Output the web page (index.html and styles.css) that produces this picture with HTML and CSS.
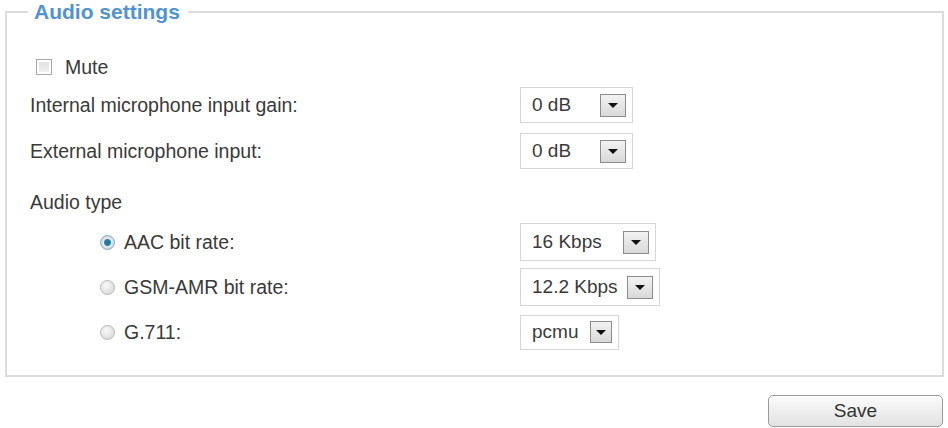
FILE: index.html
```html
<!DOCTYPE html>
<html lang="en">
<head>
    <meta charset="UTF-8">
    <meta name="viewport" content="width=device-width, initial-scale=1.0">
    <title>Audio settings</title>
    <link rel="stylesheet" href="styles.css">
</head>
<body>
    <fieldset class="panel">
        <legend>Audio settings</legend>
        <div class="content">
            <div class="row row-mute">
                <span class="checkbox"></span>
                <span class="check-label">Mute</span>
            </div>

            <div class="row">
                <span class="label">Internal microphone input gain:</span>
                <div class="select w-db"><span>0 dB</span><span class="arrow"></span></div>
            </div>

            <div class="row">
                <span class="label">External microphone input:</span>
                <div class="select w-db"><span>0 dB</span><span class="arrow"></span></div>
            </div>

            <div class="row row-title">
                <span class="label">Audio type</span>
            </div>

            <div class="row row-radio">
                <span class="label label-radio"><span class="radio checked"></span>AAC bit rate:</span>
                <div class="select w-16"><span>16 Kbps</span><span class="arrow"></span></div>
            </div>

            <div class="row row-radio">
                <span class="label label-radio"><span class="radio"></span>GSM-AMR bit rate:</span>
                <div class="select w-12"><span>12.2 Kbps</span><span class="arrow"></span></div>
            </div>

            <div class="row row-radio">
                <span class="label label-radio"><span class="radio"></span>G.711:</span>
                <div class="select w-pcmu"><span>pcmu</span><span class="arrow"></span></div>
            </div>
        </div>
    </fieldset>

    <div class="actions">
        <button class="save">Save</button>
    </div>
</body>
</html>
```

FILE: styles.css
```css
body {
    margin: 0;
    font-family: "Liberation Sans", Arial, sans-serif;
    font-size: 19.5px;
    color: #3a3a3a;
    background-color: #fff;
}
.panel {
    margin: 0 4px 0 5px;
    padding: 0;
    border: 2px solid #dcdcdc;
    min-width: 0;
}
.panel legend {
    margin-left: 21px;
    padding: 0 8px 0 6px;
    font-size: 21px;
    line-height: 24px;
    font-weight: bold;
    color: #4f93cf;
}
.content {
    padding: 23px 0 24px 23px;
}
.row {
    display: flex;
    align-items: center;
    height: 36px;
    margin-bottom: 10px;
}
.row-mute {
    height: 40px;
    margin-bottom: 0;
}
.row-title {
    margin-top: 15px;
    margin-bottom: 3px;
}
.row-radio {
    height: 38px;
    margin-bottom: 7px;
}
.row-radio:last-child {
    margin-bottom: 0;
}
.label {
    width: 490px;
    flex-shrink: 0;
}
.label-radio {
    display: flex;
    align-items: center;
    padding-left: 70px;
    box-sizing: border-box;
}
.checkbox {
    width: 14px;
    height: 14px;
    margin: 0 13px 0 6px;
    border: 1px solid #a8a8a8;
    background: linear-gradient(#dcdcdc, #f4f4f4);
    box-shadow: inset 0 0 0 2px #fff;
}
.radio {
    width: 15px;
    height: 15px;
    margin-right: 9px;
    border-radius: 50%;
    border: 1px solid #b8b8b8;
    background: radial-gradient(circle at 40% 35%, #fafafa, #d2d2d2);
    box-sizing: border-box;
}
.radio.checked {
    border-color: #8fa7b8;
    background: radial-gradient(circle, #1e6f8f 0, #2a85a8 3px, #e4ecf2 4px, #c9d3da 7px);
}
.select {
    display: flex;
    align-items: center;
    justify-content: space-between;
    height: 36px;
    padding: 0 6px 0 11px;
    border: 1px solid #d6d6d6;
    box-sizing: border-box;
    background-color: #fff;
    font-size: 19px;
}
.row-radio .select {
    height: 38px;
}
.w-db {
    width: 113px;
}
.w-16 {
    width: 136px;
}
.w-12 {
    width: 140px;
}
.row-radio .w-pcmu {
    width: 99px;
    height: 35px;
}
.arrow {
    position: relative;
    width: 26px;
    height: 23px;
    border: 1px solid #8c8c8c;
    box-sizing: border-box;
    background: linear-gradient(#f2f2f2, #d9d9d9);
}
.w-pcmu .arrow {
    width: 22px;
    height: 22px;
}
.arrow::after {
    content: "";
    position: absolute;
    left: 50%;
    top: 50%;
    margin: -2px 0 0 -5px;
    border-left: 5px solid transparent;
    border-right: 5px solid transparent;
    border-top: 5px solid #111;
}
.actions {
    display: flex;
    justify-content: flex-end;
    padding: 18px 5px 0 0;
}
.save {
    width: 175px;
    height: 32px;
    font-family: "Liberation Sans", Arial, sans-serif;
    font-size: 19px;
    color: #333;
    border: 1px solid #9a9a9a;
    border-radius: 5px;
    background: linear-gradient(#fbfbfb, #e2e2e2);
    box-shadow: inset 0 1px 0 #fff;
    cursor: pointer;
}
```
